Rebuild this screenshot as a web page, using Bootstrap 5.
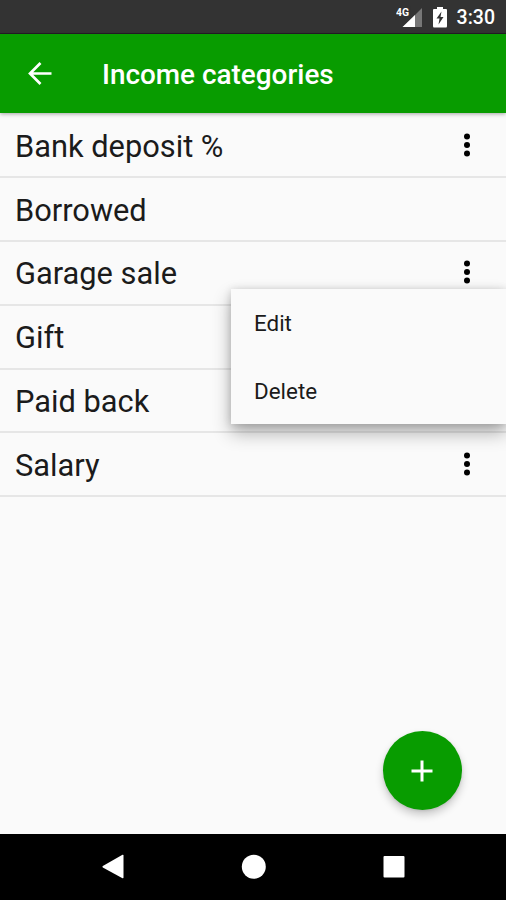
<!DOCTYPE html>
<html lang="en">
<head>
<meta charset="utf-8">
<meta name="viewport" content="width=device-width, initial-scale=1">
<title>Income categories</title>
<link href="https://cdn.jsdelivr.net/npm/bootstrap@5.3.0/dist/css/bootstrap.min.css" rel="stylesheet">
<style>
body { font-family: Roboto, "Liberation Sans", sans-serif; background: #fafafa; color: #1b1b1b; }
.status { height: 34px; background: #333; padding-right: 11px; border-bottom: 1px solid #241c27; }
.clock { font-size: 19.5px; font-weight: 500; line-height: 34px; margin-left: 9px; padding-top: 2px; }
.appbar { height: 79px; background: #089c00; padding: 0 26px; box-shadow: 0 1px 4px rgba(0,0,0,.35); z-index: 2; }
.title-text { font-size: 27.9px; font-weight: 500; margin-left: 48px; line-height: 1; padding-top: 3px; }
.cats { --bs-list-group-bg: transparent; --bs-list-group-color: #1b1b1b; padding-top: 1.4px; }
.cat { height: 63.8px; padding: 4px 32px 0 15px; font-size: 30.8px; line-height: 1; }
.list-group-flush > .cat, .list-group-flush > .cat:last-child { border-width: 0 0 2px; border-color: #e6e6e6; }
.cat svg { margin-top: -5px; }
.popup { top: 289px; left: 231px; right: 0; height: 135px; background: #fafafa; box-shadow: 0 9px 17px rgba(0,0,0,.3), 0 1px 8px rgba(0,0,0,.16); z-index: 3; }
.popup button { height: 67.5px; padding: 1px 23px 0; font-size: 22.4px; line-height: 1; color: #1b1b1b; border: 0; background: none; }
.fab { width: 79px; height: 79px; right: 44.5px; bottom: 90px; background: #089c00; border: 0; box-shadow: 0 5px 9px rgba(0,0,0,.2), 0 1px 3px rgba(0,0,0,.1); }
.navkeys { height: 66.5px; background: #000; }
</style>
<script src="https://cdn.jsdelivr.net/npm/bootstrap@5.3.0/dist/js/bootstrap.bundle.min.js" defer></script>
</head>
<body>
<div class="vh-100 d-flex flex-column position-relative overflow-hidden">
  <div class="status d-flex align-items-center justify-content-end text-white flex-shrink-0">
    <svg width="52" height="26" viewBox="0 0 52 26">
      <path d="M26 4V23H7L15 15Z" fill="#777"/>
      <path d="M19 11V23H6.500Z" fill="#fff"/>
      <rect x="0" y="2" width="14.500" height="11.500" fill="#333"/>
      <text x="0" y="12" font-size="10.500" font-weight="700" fill="#fff" textLength="13" lengthAdjust="spacingAndGlyphs">4G</text>
      <path d="M38 5H41V3H47V5H50Q51 5 51 6V22Q51 23.500 50 23.500H38Q37 23.500 37 22V6Q37 5 38 5Z" fill="#fff"/>
      <path d="M45.500 7.500L40.500 14.500H43.500L42.500 20.500L47.500 13H44.500Z" fill="#333"/>
    </svg>
    <span class="clock">3:30</span>
  </div>
  <header class="appbar d-flex align-items-center text-white flex-shrink-0 position-relative">
    <svg width="28" height="28" viewBox="0 0 28 28" fill="none" stroke="#fff" stroke-width="2.700"><path d="M25.500 13.500H4.500M14.500 3L4 13.500L14.500 24"/></svg>
    <h1 class="title-text mb-0">Income categories</h1>
  </header>
  <main class="flex-grow-1">
    <ul class="list-group list-group-flush cats">
      <li class="list-group-item cat d-flex align-items-center justify-content-between"><span>Bank deposit %</span><svg width="14" height="26" viewBox="0 0 14 26"><g fill="#000"><circle cx="7" cy="4.500" r="3"/><circle cx="7" cy="13" r="3"/><circle cx="7" cy="21.500" r="3"/></g></svg></li>
      <li class="list-group-item cat d-flex align-items-center justify-content-between"><span>Borrowed</span></li>
      <li class="list-group-item cat d-flex align-items-center justify-content-between"><span>Garage sale</span><svg width="14" height="26" viewBox="0 0 14 26"><g fill="#000"><circle cx="7" cy="4.500" r="3"/><circle cx="7" cy="13" r="3"/><circle cx="7" cy="21.500" r="3"/></g></svg></li>
      <li class="list-group-item cat d-flex align-items-center justify-content-between"><span>Gift</span></li>
      <li class="list-group-item cat d-flex align-items-center justify-content-between"><span>Paid back</span></li>
      <li class="list-group-item cat d-flex align-items-center justify-content-between"><span>Salary</span><svg width="14" height="26" viewBox="0 0 14 26"><g fill="#000"><circle cx="7" cy="4.500" r="3"/><circle cx="7" cy="13" r="3"/><circle cx="7" cy="21.500" r="3"/></g></svg></li>
    </ul>
  </main>
  <div class="popup position-absolute d-flex flex-column">
    <button type="button" class="text-start">Edit</button>
    <button type="button" class="text-start">Delete</button>
  </div>
  <button type="button" class="fab rounded-circle position-absolute d-flex align-items-center justify-content-center p-0" aria-label="Add">
    <svg width="22" height="22" viewBox="0 0 22 22" stroke="#fff" stroke-width="3"><path d="M11 .5V21.500M.5 11H21.500"/></svg>
  </button>
  <nav class="navkeys row g-0 flex-shrink-0">
    <div class="col-12 d-flex align-items-center justify-content-center">
      <svg width="303" height="26" viewBox="0 0 303 26" fill="#fff">
        <path d="M0.800 12L20.500 .8Q21.500 .5 21.500 1.500V23.500Q21.500 24.500 20.500 24.200L.8 13.500Q0 12.800 .8 12Z"/>
        <circle cx="151.800" cy="12.700" r="12"/>
        <rect x="281.500" y="2" width="21" height="21.500" rx="1"/>
      </svg>
    </div>
  </nav>
</div>
</body>
</html>
